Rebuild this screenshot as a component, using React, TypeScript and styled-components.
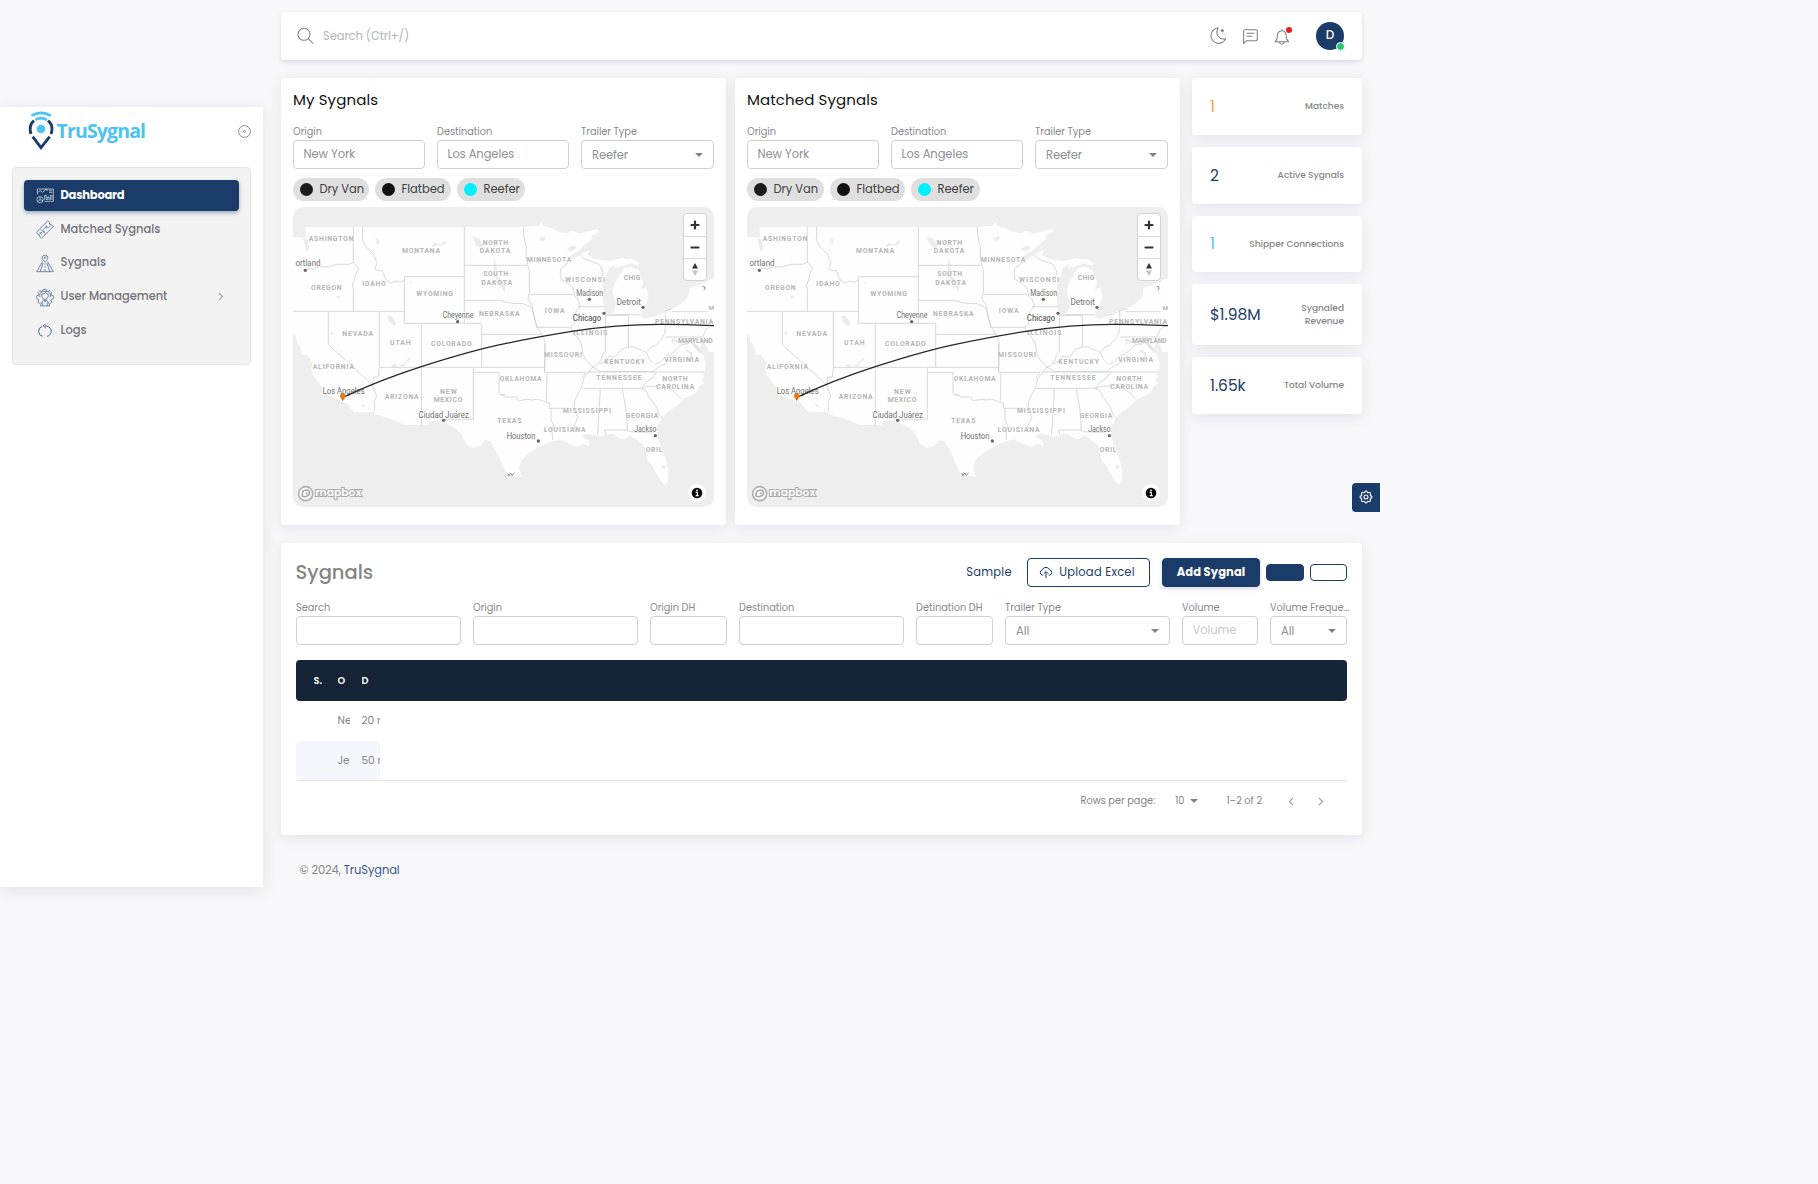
import React from "react";
import styled, { createGlobalStyle } from "styled-components";
import { TbSettings } from "react-icons/tb";

const navy = "#1b3c69";

const GlobalStyle = createGlobalStyle`
  *, *::before, *::after { box-sizing: border-box; }
  body {
    margin: 0;
    background: #f8f8fb;
    color: #808080;
    font-family: Poppins, Inter, "Liberation Sans", sans-serif;
    font-size: 11.5px;
    letter-spacing: -0.03px;
  }
  button { font: inherit; cursor: pointer; }
`;

const shadow = "0 3px 14px rgba(60, 55, 95, 0.11)";

const Page = styled.div`
  display: flex;
  align-items: flex-start;
  width: 1380px;
  min-height: 1184px;
`;

/* Sidebar */
const Sidebar = styled.aside`
  flex: none;
  width: 263px;
  height: 780px;
  margin-top: 107px;
  background: #fff;
  box-shadow: 0 3px 14px rgba(60, 55, 95, 0.13);
`;
const Brand = styled.div`
  display: flex;
  align-items: flex-start;
  height: 60px;
  padding: 4px 12px 0 28px;
`;
const BrandName = styled.span`
  flex: 1;
  padding: 6px 0 0 2.5px;
  color: #4bc4f3;
  font: 700 19.5px/28px "Open Sans", sans-serif;
  letter-spacing: -0.85px;
`;
const Menu = styled.nav`
  display: flex;
  flex-direction: column;
  gap: 2.75px;
  width: 239px;
  height: 198px;
  margin-left: 12px;
  padding: 12px 11px;
  background: #f3f3f3;
  border: 1px solid #e5e5e6;
  border-radius: 4px;
`;
const MenuItem = styled.a<{ $active?: boolean }>`
  display: flex;
  align-items: center;
  height: 31px;
  padding: 0 15px 0 12px;
  gap: 6px;
  border-radius: 4px;
  font-weight: ${(p) => (p.$active ? 700 : 500)};
  letter-spacing: ${(p) => (p.$active ? "-0.25px" : "-0.04px")};
  color: ${(p) => (p.$active ? "#fff" : "#75747c")};
  background: ${(p) => (p.$active ? navy : "transparent")};
  box-shadow: ${(p) => (p.$active ? "0 2px 4px rgba(27,60,105,.4)" : "none")};
  svg { flex: none; }
  span { flex: 1; padding: 0 0 0.5px 0.5px; }
`;

/* Main column */
const Main = styled.main`
  display: flex;
  flex-direction: column;
  width: 1081px;
  margin-left: 18px;
  padding-top: 12px;
`;
const Card = styled.section`
  background: #fff;
  border-radius: 4px;
  box-shadow: ${shadow};
`;
const Navbar = styled.header`
  display: flex;
  align-items: center;
  height: 48px;
  padding: 0 18px 0 16px;
  background: #fff;
  border-radius: 4px;
  box-shadow: 0 2px 4px rgba(60, 55, 95, 0.16);
`;
const SearchText = styled.span`
  flex: 1;
  margin-left: 8px;
  color: #b5b5b9;
  letter-spacing: -0.08px;
`;
const NavIcons = styled.div`
  display: flex;
  align-items: center;
  gap: 14px;
  margin-right: 22px;
`;
const Avatar = styled.div`
  position: relative;
  display: grid;
  place-items: center;
  width: 28px;
  height: 28px;
  border-radius: 50%;
  background: ${navy};
  color: #fff;
  font-weight: 500;
  font-size: 12px;
  padding-bottom: 2px;
  &::after {
    content: "";
    position: absolute;
    right: -1px;
    bottom: -1px;
    width: 9px;
    height: 9px;
    border: 1px solid #fff;
    border-radius: 50%;
    background: #28c76f;
  }
`;
const Overview = styled.div`
  display: flex;
  align-items: flex-start;
  margin: 18px 0;
`;
const MapCard = styled(Card)`
  width: 445px;
  height: 447px;
  padding: 12px;
  margin-right: 9px;
  & + & { margin-right: 12px; }
`;
const CardTitle = styled.h2`
  margin: 0;
  color: #111;
  font-size: 15px;
  line-height: 20px;
  font-weight: 400;
  letter-spacing: 0.11px;
`;
const MapFields = styled.div`
  display: grid;
  grid-template-columns: 132px 132px 133px;
  gap: 12px;
  margin-top: 14px;
`;
const FieldBox = styled.div`
  min-width: 0;
`;
const Label = styled.div`
  height: 16px;
  color: #88888a;
  font-size: 9.75px;
  line-height: 15px;
  letter-spacing: 0;
  white-space: nowrap;
`;
const Input = styled.div<{ $muted?: boolean; $select?: boolean }>`
  display: flex;
  align-items: center;
  justify-content: space-between;
  height: 29px;
  padding: ${(p) => (p.$select ? "1px 10px 0 10px" : "0 10px 1px 9.5px")};
  border: 1px solid #d0d0d2;
  border-radius: 4px;
  color: ${(p) => (p.$muted ? "#c9c9cc" : "#8f8f95")};
  letter-spacing: -0.06px;
`;
const Caret = styled.i`
  border: 4px solid transparent;
  border-top: 4px solid #828286;
  border-bottom: 0;
`;
const Chips = styled.div`
  display: flex;
  gap: 6px;
  margin: 9px 0 6px;
`;
const Chip = styled.div<{ $w: number }>`
  display: flex;
  align-items: center;
  width: ${(p) => p.$w}px;
  height: 23px;
  padding: 0 0 1px 7px;
  border-radius: 12px;
  background: #dfdfdf;
  color: #414141;
  white-space: nowrap;
`;
const Dot = styled.i<{ $c: string }>`
  width: 13px;
  height: 13px;
  margin: 1px 6.5px 0 0;
  border-radius: 50%;
  background: ${(p) => p.$c};
`;
const MapFrame = styled.div`
  position: relative;
  width: 421px;
  height: 300px;
  overflow: hidden;
  border-radius: 10px;
  background: #eee;
  svg { display: block; }
`;
const Zoomer = styled.div`
  position: absolute;
  top: 6px;
  right: 7px;
  width: 24px;
  height: 68px;
  border: 1px solid #d2d2d2;
  border-radius: 4px;
  background: #fff;
`;
const Stats = styled.div`
  display: flex;
  flex-direction: column;
  gap: 12px;
  width: 170px;
`;
const StatCard = styled(Card)<{ $h: number }>`
  display: flex;
  align-items: center;
  justify-content: space-between;
  height: ${(p) => p.$h}px;
  padding: 0 18px;
`;
const StatValue = styled.div<{ $c: string }>`
  color: ${(p) => p.$c};
  font-size: 15.5px;
  padding-bottom: 1px;
  letter-spacing: -0.05px;
`;
const StatLabel = styled.div`
  color: #858585;
  font-size: 9px;
  line-height: 13px;
  font-weight: 500;
  letter-spacing: 0;
  text-align: right;
  white-space: pre;
`;

/* Table card */
const TableCard = styled(Card)`
  height: 292px;
  padding: 15px 15px 0;
`;
const TableTop = styled.div`
  display: flex;
  align-items: center;
  height: 29px;
`;
const TableTitle = styled.h1`
  flex: 1;
  margin: 0 0 0 -0.5px;
  color: #858585;
  font-size: 19.5px;
  font-weight: 500;
  letter-spacing: 0;
`;
const Button = styled.button<{ $w: number; $kind: "text" | "outline" | "solid"; $small?: boolean }>`
  display: flex;
  align-items: center;
  justify-content: center;
  gap: 6px;
  width: ${(p) => p.$w}px;
  height: ${(p) => (p.$small ? 17 : 29)}px;
  padding: ${(p) => (p.$kind === "outline" ? "0 3px 0 0" : "0")};
  border: ${(p) => (p.$kind === "text" ? "0" : `1px solid ${navy}`)};
  border-radius: 4px;
  background: ${(p) => (p.$kind === "solid" ? navy : "transparent")};
  color: ${(p) => (p.$kind === "solid" ? "#fff" : navy)};
  font-size: 11.5px;
  font-weight: ${(p) => (p.$kind === "solid" ? 700 : 400)};
  letter-spacing: ${(p) => (p.$kind === "solid" ? "0.1px" : "0.25px")};
  white-space: nowrap;
  box-shadow: ${(p) => (p.$kind === "solid" && !p.$small ? "0 2px 4px rgba(47,43,61,.18)" : "none")};
`;
const Spacer = styled.i<{ $w: number }>`
  width: ${(p) => p.$w}px;
`;
const Filters = styled.div`
  display: grid;
  grid-template-columns: 165px 165px 77px 165px 77px 165px 76px 77px;
  gap: 12px;
  margin-top: 13px;
`;
const HeadRow = styled.div`
  display: flex;
  align-items: center;
  height: 41px;
  margin-top: 15px;
  padding-left: 17.5px;
  border-radius: 4px;
  background: #152436;
  color: #fff;
  font-size: 9.75px;
  font-weight: 600;
`;
const Row = styled.div<{ $tint?: boolean }>`
  display: flex;
  align-items: center;
  width: 84px;
  height: 39px;
  padding: ${(p) => (p.$tint ? "1px" : "0")} 0 0 41.5px;
  margin-top: ${(p) => (p.$tint ? "1px" : "0")};
  border-radius: 4px;
  background: ${(p) => (p.$tint ? "#f4f8fd" : "#fff")};
  font-size: 10.5px;
  letter-spacing: 0;
  color: #888;
`;
const Cell = styled.span<{ $w: number; $gap?: number }>`
  flex: none;
  width: ${(p) => p.$w}px;
  margin-right: ${(p) => p.$gap ?? 0}px;
  overflow: hidden;
  white-space: nowrap;
`;
const Pager = styled.div`
  display: flex;
  align-items: center;
  justify-content: flex-end;
  height: 42px;
  padding-right: 23.5px;
  padding-bottom: 1px;
  border-top: 1px solid #e2e2e2;
  font-size: 9.75px;
  letter-spacing: 0;
  color: #858585;
`;
const Footer = styled.footer`
  margin: 27px 0 0 18.5px;
  line-height: 16px;
  color: #858589;
  letter-spacing: -0.12px;
  a { color: #3c5a89; }
`;
const SettingsTab = styled.button`
  position: absolute;
  left: 1352px;
  top: 482.5px;
  display: grid;
  place-items: center;
  width: 28px;
  height: 29px;
  padding: 0;
  border: 0;
  border-radius: 4px 0 0 4px;
  background: ${navy};
  color: #fff;
`;

const LogoMark = () => (
  <svg width="26" height="39" viewBox="84 64 78 117" fill="none">
    <path d="M94 78Q123 61 153 78M106 91Q123 80 141 91" stroke="#4bc4f3" strokeWidth="8" />
    <circle cx="123" cy="118" r="13" fill="#4bc4f3" />
    <path d="M102 93Q85 108 93 133M144 93Q162 108 153 133M98 141L123 174L149 141" stroke={navy} strokeWidth="8.5" />
  </svg>
);
const PinToggle = () => (
  <svg width="13" height="13" viewBox="0 0 13 13" fill="none" stroke="#8a8a8e">
    <circle cx="6.5" cy="6.5" r="5.9" />
    <circle cx="6.5" cy="6.5" r="1" />
  </svg>
);
const ToggleSlot = styled.span`
  padding-top: 14px;
`;

const DashboardIcon = () => (
  <svg width="18" height="18" viewBox="108 290 54 54" fill="none" stroke="#e8eef6" strokeWidth="2">
    <path d="M112 312V296H160V333H134M113 306l8-5 6 5 10-8M136 297h5v5M147 301h9M147 306h9M134 329V315h5v14M143 329v-9h4v9M151 329v-14h5v14" />
    <circle cx="120" cy="328" r="9.5" />
    <path d="M120 319v9l-7 6M120 328l9 3" />
  </svg>
);
const TicketIcon = () => (
  <svg width="18" height="20" viewBox="107 387 56 60" fill="none" stroke="#49658f" strokeWidth="2.4">
    <path d="M109 427L144 391L149 396Q147 402 154 403L161 409L124 446L118 440Q119 433 112 433ZM121 418L136 431M129 419l11-11M136 408l6 2-2 6M148 399l3 5M145 413l7-5M118 427l7 6M118 433l7-6M129 423l5 1" />
  </svg>
);
const RoadIcon = () => (
  <svg width="18" height="19" viewBox="107 490 56 57" fill="none" stroke="#49658f" strokeWidth="2.4">
    <path d="M135 514Q120 500 129 494Q136 490 142 495Q148 503 135 514ZM127 513L109 544H161L143 513M129 517L120 544M141 517L150 544M135 518v5M135 527v5M135 536v6" />
    <circle cx="135" cy="500" r="2.5" />
  </svg>
);
const UserGearIcon = () => (
  <svg width="18" height="20" viewBox="107 590 56 60" fill="none" stroke="#49658f" strokeWidth="2.3">
    <path d="M119 642l-6-6 3-7-7-4v-9l7-2-3-8 6-6 7 3 4-7h9l3 7 8-3 6 6-3 8 8 2v9l-8 4 3 7-6 6" />
    <path d="M125 618v-7q8 0 12-5 2 5 8 5v7q-3 10-10 10t-10-10M119 621q-4-19 16-19t16 19M121 648q0-14 10-18h8q10 4 10 18zM128 636v11M142 636v11M132 630l3 5 4-5" />
  </svg>
);
const ResetIcon = () => (
  <svg width="18" height="18" viewBox="108 695 54 54" fill="none" stroke="#49658f" strokeWidth="3">
    <path d="M127 708A15.5 15.5 0 0 0 128 738M141 738A15.5 15.5 0 0 0 135 707.5M137 700l-7 7 7 6" />
  </svg>
);
const Chevron = ({ left }: { left?: boolean }) => (
  <svg width="6" height="9" viewBox="0 0 6 9" fill="none" stroke="#a0a0a3" strokeWidth="1.1">
    <path d={left ? "M5 .8L1.5 4.5 5 8.2" : "M1 .8L4.5 4.5 1 8.2"} />
  </svg>
);
const SearchIcon = () => (
  <svg width="18" height="18" viewBox="81 81 54 54" fill="none" stroke="#858585" strokeWidth="3.2">
    <circle cx="102" cy="103" r="18" />
    <path d="M115 116l15 15" />
  </svg>
);
const MoonIcon = () => (
  <svg width="18" height="18" viewBox="148 81 54 54" fill="none" stroke="#7f7f7f" strokeWidth="3.2" strokeLinejoin="round">
    <path d="M176 84A23 23 0 1 0 198 116C180 121 164 102 176 84Z" />
    <path d="M188 87l2 3 3 2-3 2-2 3-2-3-3-2 3-2zM196 103v3" strokeWidth="2" fill="#7f7f7f" />
  </svg>
);
const MessageIcon = () => (
  <svg width="18" height="18" viewBox="244 81 54 54" fill="none" stroke="#7f7f7f" strokeWidth="3.2" strokeLinejoin="round">
    <path d="M257 89H288Q293 89 293 94V117Q293 122 288 122H261L252 130V94Q252 89 257 89ZM261 100h23M261 109h17" />
  </svg>
);
const BellIcon = () => (
  <svg width="21" height="18" viewBox="339 78 63 54" fill="none" stroke="#7f7f7f" strokeWidth="3.2" strokeLinejoin="round">
    <path d="M345 122Q352 117 352 108Q352 91 363 90Q366 82 369 90Q379 92 379 108Q379 117 386 122ZM357 123Q366 136 374 123" />
    <circle cx="387" cy="87" r="9" fill="#ea1c24" stroke="none" />
  </svg>
);
const CloudUp = () => (
  <svg width="14" height="13" viewBox="0 0 14 13" fill="none" stroke={navy}>
    <path d="M4.3 9.2H3.5A2.8 2.8 0 0 1 3.3 3.8 4 4 0 0 1 10.7 3.9 2.7 2.7 0 0 1 10.4 9.2H9.7M7 12V6M4.9 7.6L7 5.5l2.1 2.1" />
  </svg>
);

/* Map art: centre x, baseline y and length of every region name */
const regions: [string, number, number, number][] = [
  ["ASHINGTON", 138, 124, 134], ["MONTANA", 408, 160, 114], ["OREGON", 124, 271, 92],
  ["IDAHO", 267, 258, 70], ["WYOMING", 449, 289, 110], ["NEVADA", 218, 408, 92],
  ["UTAH", 346, 435, 62], ["COLORADO", 499, 437, 122], ["ALIFORNIA", 145, 506, 124],
  ["ARIZONA", 350, 597, 102], ["NEW", 490, 581, 50], ["MEXICO", 489, 605, 86],
  ["NORTH", 631, 134, 76], ["DAKOTA", 630, 159, 92], ["SOUTH", 632, 229, 74],
  ["DAKOTA", 635, 254, 92], ["NEBRASKA", 643, 348, 122], ["MINNESOTA", 792, 187, 134],
  ["WISCONSI", 900, 247, 120], ["CHIG", 1041, 239, 50], ["IOWA", 809, 339, 60],
  ["ILLINOIS", 916, 405, 102], ["MISSOURI", 834, 470, 114], ["PENNSYLVANIA", 1197, 373, 174],
  ["MARYLAND", 1231, 428, 104], ["KENTUCKY", 1019, 492, 122], ["VIRGINIA", 1190, 487, 104],
  ["TENNESSEE", 1002, 541, 136], ["NORTH", 1170, 543, 76], ["CAROLINA", 1170, 567, 114],
  ["OKLAHOMA", 707, 544, 126], ["TEXAS", 673, 670, 72], ["MISSISSIPPI", 906, 638, 144],
  ["LOUISIANA", 839, 696, 126], ["GEORGIA", 1071, 654, 98], ["ORIL", 1107, 755, 50],
];
const cities: [string, number, number, number][] = [
  ["ortland", 69, 199, 75], ["Cheyenne", 519, 355, 93], ["Los Angeles", 176, 582, 126],
  ["Ciudad Juárez", 476, 653, 151], ["Madison", 914, 288, 80], ["Detroit", 1031, 316, 73],
  ["Houston", 708, 717, 86], ["Jackso", 1081, 696, 67],
];
const dots: [number, number][] = [[61, 211], [518, 365], [476, 661], [913, 298], [1074, 322], [957, 340], [760, 723], [1111, 707]];

const land =
  "M62 81L715 81 740 78 762 77 769 65 774 78 800 84 820 95 848 100 860 91 884 102 900 96 935 88 945 94 919 108 920 118 898 135 884 150 858 165 848 180 867 176 896 158 915 150 908 164 925 175 950 181 975 183 1010 174 1030 178 1043 176 1063 190 1060 197 1035 190 1012 198 996 202 985 207 992 194 972 204 966 222 954 245 953 290 957 330 965 347 979 346 990 327 992 305 983 275 988 252 999 235 1008 218 1018 204 1040 201 1060 210 1068 229 1075 248 1066 268 1083 263 1091 288 1084 310 1074 325 1068 350 1080 357 1115 347 1142 335 1163 326 1190 310 1205 296 1213 278 1212 266 1240 254 1265 246 1274 238 1287 236 1287 455 1272 457 1260 430 1244 407 1249 438 1239 449 1256 467 1262 488 1260 510 1252 516 1258 530 1248 538 1258 550 1243 558 1236 575 1218 588 1198 595 1185 609 1163 626 1141 642 1130 657 1115 684 1117 710 1132 750 1142 780 1150 810 1149 846 1138 854 1127 841 1115 822 1103 799 1087 779 1084 756 1076 735 1055 719 1036 706 1020 718 1003 715 986 701 963 703 948 710 930 705 902 702 888 709 909 721 914 739 894 731 876 741 852 731 825 718 800 724 775 734 756 745 728 762 708 782 702 806 712 831 682 827 664 818 651 795 645 776 630 746 616 724 600 720 586 737 563 744 543 731 531 705 514 686 491 673 472 662 432 664 430 675 358 675 330 660 269 643 267 636 207 637 188 612 165 601 137 590 116 573 101 547 83 525 79 507 83 489 67 464 51 464 45 440 35 426 33 410 24 400V112H62Z";

const borders =
  "M205 81V187L221 205 213 220 209 240 202 255 205 269V334M24 334H358M205 187L190 193H155L130 201 105 200 85 207 65 205M233 81L232 119L242 139 255 153 267 165 271 179 277 188 269 206 279 212 291 212 299 230 306 243 320 249 334 243 346 247 358 240M538 81V370M358 230H538M358 230V370H590M130 334V434L261 553L275 589 267 606 270 622 267 635M283 334V502M409 370V675M283 502H780M283 502L280 531 266 532 263 555M590 370V502M538 301H645L665 307 684 310 714 311 735 320 744 330 748 355 757 382 774 408 781 429 779 516M590 403H773M538 196H725M715 81L717 112 724 141 723 169 729 198 733 211V283H868M731 283L729 298 741 314 743 334 750 357 755 382H860M565 502V517H642V580L651 585 660 582M565 517V658H466M645 583L670 592 694 591 702 602 727 598 744 600 758 597 778 605 793 609V625H853M779 432V517H903L891 535M786 517L784 604M798 625V660L807 677 801 690 803 720M848 180L844 194 828 205 826 220 828 237 849 251 864 264 869 287 880 300 886 320 873 333 869 348 868 370 857 384 866 401 880 415 890 433 892 457 901 477 915 494 923 501 908 520 896 537 889 564 878 583 869 605 867 625 879 652 866 677 872 695M879 320H958M961 345V453L953 464 947 482 935 495 921 503M961 346H1030V441L1014 446 1004 454 997 466 984 472 971 468 963 482 942 492M981 344H1067M892 565H1070L1084 574 1091 591 1104 607 1115 622 1121 642 1135 659M908 516H1256M921 500L945 514 1104 515 1117 503 1137 493 1153 480 1168 464M1030 441L1046 440 1058 447 1072 452 1086 459 1091 475 1105 491M1086 455L1096 443 1114 434 1130 416 1139 401 1142 374V333M1142 333L1160 326M1160 335H1265M1142 411H1253L1264 388 1280 377M1110 493L1126 486 1144 466 1160 461 1173 450 1184 437 1202 431 1217 424 1234 434M1170 415L1160 425 1168 432M1115 516L1101 535 1084 545 1070 565M1070 567L1084 559 1115 558 1129 553 1163 570 1190 598M946 567L938 704M1012 567L1023 630 1027 690H958L962 703M1024 690L1034 695 1102 699M885 164L898 177 919 184 943 194 954 217 948 235";

const lakes =
  "M306 347l15 2 13 21-5 8-14-10-7-13zM269 110l16 10-4 12-8-2 2-10zM438 139l12-9 17 3 12-13 5 8-13 9-13-2-14 6zM318 496l12-4 8 8-15 5zM153 291l10-5 4 5-9 4zM373 246l8 1-4 5zM344 499l17-13 11-15 5 7-11 8-9 14zM54 112l14 8 6 25-9 10-5-16zM563 111l17 3 14 20 9-8-11 20-19-11zM627 172l8 24 2 33 25 20-3 30-13-25-20-27zM228 610l15 8-8 5zM136 397l7-2 3 8-6 2zM763 114l19-6-2 13-12 3zM846 149l8-9 15-3 6 8-16 8zM1128 800l7-7 7 6-5 8z";

const USMap = () => (
  <svg width="421" height="300" viewBox="24 21 1263 900" fill="none">
    <path d={land} fill="#fefefe" />
    <path d={lakes} fill="#ebebeb" />
    <path d={borders} stroke="#cdcdcd" strokeWidth="2.3" strokeLinejoin="round" />
    <path d="M1203 451l15 8 2 21M1218 425l19 15 8 18M1227 412l-5 18 19 22M1202 434l24-13M1160 418l30 12" stroke="#e4e4e4" strokeWidth="5" />
    <g fontFamily="Roboto, sans-serif" fontSize="20.5" fontWeight="700" fill="#b5b5b5" stroke="#fff" strokeWidth="1" paintOrder="stroke" textAnchor="middle">
      {regions.map(([name, x, y, w], i) => (
        <text key={i} x={x} y={y} textLength={w}>{name}</text>
      ))}
      <text x="1279" y="330" fontSize="18">M</text>
    </g>
    <g fontFamily="Roboto, sans-serif" fontSize="26" fill="#707070" stroke="#fff" strokeWidth="2.5" paintOrder="stroke" textAnchor="middle">
      {cities.map(([name, x, y, w]) => (
        <text key={name} x={x} y={y} textLength={w} lengthAdjust="spacingAndGlyphs">{name}</text>
      ))}
      <text x="906" y="364" textLength="85" lengthAdjust="spacingAndGlyphs" fontWeight="500" fill="#666">Chicago</text>
    </g>
    {dots.map(([x, y], i) => (
      <circle key={i} cx={x} cy={y} r="5" fill="#686868" />
    ))}
    <path d="M1252 260h7q4 8-3 10M668 820l4 7 5-8 5 8 6-9" stroke="#777" strokeWidth="2.5" />
    <path d="M172 593C250 556 325 527 409 500C490 474 570 449 660 431C720 418 780 407 860 394C950 380 1050 373 1125 373C1180 373 1240 375 1287 377" stroke="#262626" strokeWidth="3.6" />
    <path d="M173 603L167 592A8 8 0 1 1 180 592Z" fill="#777" />
    <circle cx="173.5" cy="589" r="8" fill="#fb7900" />
    <circle cx="62" cy="881" r="21" fill="#fff" stroke="#b0b0b0" strokeWidth="5" />
    <path d="M52 889Q49 871 63 870A9 9 0 1 1 66 888Q60 892 52 889Z" fill="#fff" stroke="#a9a9a9" strokeWidth="5" />
    <path d="M65 875l2 3 4 1-4 2-2 3-2-3-3-2 3-1z" fill="#aaa" />
    <text x="91" y="888" textLength="138" lengthAdjust="spacingAndGlyphs" fontFamily="Poppins, Inter, sans-serif" fontSize="30" fontWeight="600" fill="#fff" stroke="#aaa" strokeWidth="6" paintOrder="stroke">mapbox</text>
    <circle cx="1236" cy="879" r="27" fill="#fff" />
    <circle cx="1236" cy="879" r="16" fill="#080808" />
    <path d="M1232 877h5v9M1232 887h9" stroke="#fff" strokeWidth="3.4" />
    <circle cx="1236" cy="871" r="2.8" fill="#fff" />
  </svg>
);
const ZoomGlyphs = () => (
  <svg width="22" height="66" viewBox="0 0 22 66" fill="none">
    <path d="M0 22.5H22M0 44.5H22" stroke="#ddd" />
    <path d="M7.5 11H14.5M11 7.5V14.5M7.5 33.5H14.5" stroke="#333" strokeWidth="2.2" strokeLinecap="round" />
    <path d="M8 54.5L11 49L14 54.5Z" fill="#333" />
    <path d="M8 56.5L11 62L14 56.5Z" fill="#c4c4c4" />
  </svg>
);

type FieldProps = { label: string; value?: string; select?: boolean; muted?: boolean };
const Field = ({ label, value, select, muted }: FieldProps) => (
  <FieldBox>
    <Label>{label}</Label>
    <Input $select={select} $muted={muted}>
      <span>{value}</span>
      {select && <Caret />}
    </Input>
  </FieldBox>
);

const SygnalMap = ({ title, chips }: { title: string; chips: number[] }) => (
  <MapCard>
    <CardTitle>{title}</CardTitle>
    <MapFields>
      <Field label="Origin" value="New York" />
      <Field label="Destination" value="Los Angeles" />
      <Field label="Trailer Type" value="Reefer" select />
    </MapFields>
    <Chips>
      <Chip $w={chips[0]}><Dot $c="#1c1c1c" />Dry Van</Chip>
      <Chip $w={chips[1]}><Dot $c="#111" />Flatbed</Chip>
      <Chip $w={chips[2]}><Dot $c="#00f0ff" />Reefer</Chip>
    </Chips>
    <MapFrame>
      <USMap />
      <Zoomer><ZoomGlyphs /></Zoomer>
    </MapFrame>
  </MapCard>
);

const stats: [string, string, string, number][] = [
  ["1", "Matches", "#ff9f43", 57],
  ["2", "Active Sygnals", navy, 57],
  ["1", "Shipper Connections", "#4bc4f3", 56],
  ["$1.98M", "Sygnaled\nRevenue", navy, 61],
  ["1.65k", "Total Volume", navy, 57],
];

export default function App() {
  return (
    <Page>
      <GlobalStyle />
      <Sidebar>
        <Brand>
          <LogoMark />
          <BrandName>TruSygnal</BrandName>
          <ToggleSlot><PinToggle /></ToggleSlot>
        </Brand>
        <Menu>
          <MenuItem $active><DashboardIcon /><span>Dashboard</span></MenuItem>
          <MenuItem><TicketIcon /><span>Matched Sygnals</span></MenuItem>
          <MenuItem><RoadIcon /><span>Sygnals</span></MenuItem>
          <MenuItem><UserGearIcon /><span>User Management</span><Chevron /></MenuItem>
          <MenuItem><ResetIcon /><span>Logs</span></MenuItem>
        </Menu>
      </Sidebar>
      <Main>
        <Navbar>
          <SearchIcon />
          <SearchText>Search (Ctrl+/)</SearchText>
          <NavIcons><MoonIcon /><MessageIcon /><BellIcon /></NavIcons>
          <Avatar>D</Avatar>
        </Navbar>
        <Overview>
          <SygnalMap title="My Sygnals" chips={[76, 76, 68]} />
          <SygnalMap title="Matched Sygnals" chips={[77, 75, 69]} />
          <Stats>
            {stats.map(([value, label, color, h]) => (
              <StatCard key={label} $h={h}>
                <StatValue $c={color}>{value}</StatValue>
                <StatLabel>{label}</StatLabel>
              </StatCard>
            ))}
          </Stats>
        </Overview>
        <TableCard>
          <TableTop>
            <TableTitle>Sygnals</TableTitle>
            <Button $kind="text" $w={46}>Sample</Button>
            <Spacer $w={15} />
            <Button $kind="outline" $w={123}><CloudUp />Upload Excel</Button>
            <Spacer $w={12} />
            <Button $kind="solid" $w={98}>Add Sygnal</Button>
            <Spacer $w={6} />
            <Button $kind="solid" $small $w={38} />
            <Spacer $w={6} />
            <Button $kind="outline" $small $w={37} />
          </TableTop>
          <Filters>
            <Field label="Search" />
            <Field label="Origin" />
            <Field label="Origin DH" />
            <Field label="Destination" />
            <Field label="Detination DH" />
            <Field label="Trailer Type" value="All" select />
            <Field label="Volume" value="Volume" muted />
            <Field label="Volume Freque…" value="All" select />
          </Filters>
          <HeadRow>
            <Cell $w={8} $gap={16}>S.</Cell>
            <Cell $w={9} $gap={15}>O</Cell>
            <Cell $w={9}>D</Cell>
          </HeadRow>
          <Row><Cell $w={12.5} $gap={11.5}>Ne</Cell><Cell $w={18.5}>20 mi</Cell></Row>
          <Row $tint><Cell $w={12.5} $gap={11.5}>Je</Cell><Cell $w={18.5}>50 mi</Cell></Row>
          <Pager>
            <span>Rows per page:</span>
            <Spacer $w={20} />
            <span>10</span>
            <Spacer $w={6} />
            <Caret />
            <Spacer $w={28} />
            <span>1–2 of 2</span>
            <Spacer $w={26} />
            <Chevron left />
            <Spacer $w={23.5} />
            <Chevron />
          </Pager>
        </TableCard>
        <Footer>© 2024, <a>TruSygnal</a></Footer>
      </Main>
      <SettingsTab aria-label="Settings"><TbSettings size={16} strokeWidth={1.6} /></SettingsTab>
    </Page>
  );
}
